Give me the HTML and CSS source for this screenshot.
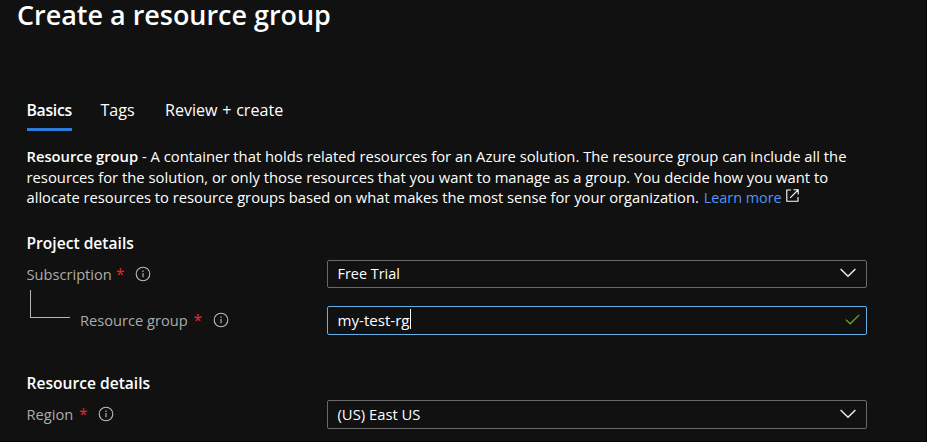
FILE: index.html
```
<!DOCTYPE html>
<html lang="en">
<head>
<meta charset="utf-8">
<title>Create a resource group</title>
<link rel="stylesheet" href="styles.css">
</head>
<body>
<svg class="defs" aria-hidden="true">
  <symbol id="info" viewBox="0 0 16 16"><circle cx="8" cy="8" r="6.8" fill="none" stroke="currentColor" stroke-width="1.1"/><path d="M8 6.9v4.4M8 4.6v1.3" stroke="currentColor" stroke-width="1.1"/></symbol>
  <symbol id="chevron" viewBox="0 0 16 10"><path d="M.6.9 8 8.3 15.4.9" fill="none" stroke="currentColor" stroke-width="1.4"/></symbol>
</svg>
<main class="page">
  <h1 class="title">Create a resource group</h1>
  <nav class="tabs">
    <a class="tab active">Basics</a>
    <a class="tab tags">Tags</a>
    <a class="tab review">Review + create</a>
  </nav>
  <p class="intro">
    <span class="line first"><b>Resource group</b> - A container that holds related resources for an Azure solution. The resource group can include all the</span>
    <span class="line">resources for the solution, or only those resources that you want to manage as a group. You decide how you want to</span>
    <span class="line last">allocate resources to resource groups based on what makes the most sense for your organization. <a class="link">Learn more</a><svg class="external" viewBox="0 0 13 13"><path d="M5 1H.8v11.2H12V8M7.5.8H12.2V5.5M12 1 4.2 8.8" fill="none" stroke="currentColor" stroke-width="1.1"/></svg></span>
  </p>
  <section class="project">
    <h2 class="heading">Project details</h2>
    <div class="row">
      <div class="label"><span class="subscription">Subscription</span><i class="star">*</i><svg class="info"><use href="#info"/></svg></div>
      <div class="field"><span class="trial">Free Trial</span><svg class="chevron"><use href="#chevron"/></svg></div>
    </div>
    <div class="row child">
      <div class="label"><span class="branch"></span><span class="group">Resource group</span><i class="star">*</i><svg class="info"><use href="#info"/></svg></div>
      <div class="field focused"><span class="name">my-test-rg</span><span class="caret"></span><svg class="check" viewBox="0 0 15 11"><path d="M.8 5.6 5.2 9.8 14.2.9" fill="none" stroke="currentColor" stroke-width="1.3"/></svg></div>
    </div>
  </section>
  <section class="resource">
    <h2 class="heading">Resource details</h2>
    <div class="row">
      <div class="label"><span class="region">Region</span><i class="star">*</i><svg class="info"><use href="#info"/></svg></div>
      <div class="field"><span>(US) East US</span><svg class="chevron"><use href="#chevron"/></svg></div>
    </div>
  </section>
</main>
</body>
</html>
```
FILE: styles.css
```
* { box-sizing: border-box; }
body { margin: 0; background: #111; color: #fff; font-family: "Open Sans", "Noto Sans", sans-serif; font-size: 14.8px; overflow: hidden; }
.defs { display: none; }
.page { height: 442px; padding-left: 26.5px; border-right: 1px solid #080808; border-bottom: 1px solid #080808; }
.title { margin: 0 0 70px -9.5px; font-size: 26.95px; line-height: 30px; font-weight: 600; white-space: nowrap; }
.tabs { display: flex; height: 31px; font-size: 16.1px; line-height: 20px; }
.tab { padding-bottom: 8px; white-space: nowrap; }
.active { width: 45.5px; font-size: 15.8px; letter-spacing: -.3px; font-weight: 600; border-bottom: 3px solid #2f7bd8; }
.tags { margin-left: 28.5px; }
.review { margin-left: 30.3px; word-spacing: .5px; }
.intro { margin: 15px 0 0; line-height: 20.5px; }
.line { display: block; white-space: nowrap; }
.first b { font-size: 14.75px; font-weight: 600; }
.last { font-size: 14.72px; height: 20.5px; }
.link { color: #4f94f8; font-size: 14.4px; margin-left: 1px; }
.external { width: 13px; height: 13px; margin-left: 4px; vertical-align: 1px; }
.project { margin-top: 25px; }
.heading { margin: 0 0 7px; font-size: 15.6px; line-height: 20px; font-weight: 600; }
.row { display: flex; width: 840.5px; height: 29px; }
.project .row:not(.child) { height: 28.5px; }
.child { margin-top: 17.5px; }
.resource { margin-top: 38px; }
.label { width: 300px; height: 28px; display: flex; align-items: center; color: #acacac; font-size: 14.65px; white-space: nowrap; }
.subscription { width: 89.5px; }
.group { width: 113.5px; }
.region { width: 52.5px; }
.star { width: 19px; color: #e32b2b; font-style: normal; font-size: 15.5px; }
.info { width: 16px; height: 16px; color: #bcbcbc; }
.branch { width: 40px; height: 28px; margin: -31px 10px 0 3.5px; border-left: 1px solid #b5b5b5; border-bottom: 1px solid #b5b5b5; }
.field { flex: 1; display: flex; align-items: center; border: 1px solid #6a6a6a; border-radius: 2px; padding: 0 10px 1px; line-height: 20px; }
.trial { font-size: 14.4px; padding-top: 2px; }
.name { font-size: 15.1px; }
.focused { border-color: #66afe9; padding-right: 6px; }
.caret { width: 1px; height: 20px; background: #fff; margin-top: -2px; }
.chevron { width: 16px; height: 10px; margin-left: auto; color: #f0f0f0; }
.check { width: 15px; height: 11px; margin-left: auto; color: #68a82c; }
```
